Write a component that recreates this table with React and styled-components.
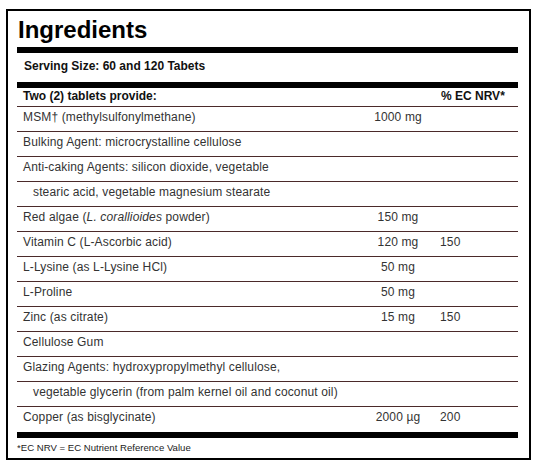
import React from 'react'
import styled, { createGlobalStyle } from 'styled-components'

const GlobalStyle = createGlobalStyle`
    body {
        margin: 0;
        background: #fff;
        font-family: "Liberation Sans", Arial, sans-serif;
    }
`

const Panel = styled.section`
    box-sizing: border-box;
    width: 525px;
    height: 451px;
    margin: 9px 0 0 6px;
    padding: 5px 11px 0 9px;
    border: 2px solid #000;
    background: #fff;
`

const Title = styled.h1`
    margin: 0 0 3px 1px;
    font-size: 24px;
    line-height: 28px;
    font-weight: 700;
    color: #000;
`

const Bar = styled.div`
    height: 6px;
    background: #000;
`

const Serving = styled.div`
    height: 29px;
    padding: 5px 0 0 7px;
    box-sizing: border-box;
    font-size: 12px;
    line-height: 16px;
    font-weight: 700;
    color: #111;
`

const Row = styled.div`
    display: grid;
    grid-template-columns: 1fr 80px 80px;
    box-sizing: border-box;
    height: ${(p) => (p.$head ? '19px' : '25px')};
    padding-bottom: ${(p) => (p.$head ? '1px' : '4px')};
    border-bottom: ${(p) => (p.$last ? 'none' : '1px solid #4b2a2a')};
    font-size: 12px;
    line-height: ${(p) => (p.$head ? '16px' : '20px')};
    font-weight: ${(p) => (p.$head ? 700 : 400)};
    letter-spacing: ${(p) => (p.$head ? '0' : '0.14px')};
    color: ${(p) => (p.$head ? '#111' : '#333')};
`

const Name = styled.span`
    padding-left: ${(p) => (p.$indent ? '16px' : '6px')};
    white-space: nowrap;
`

const Amount = styled.span`
    text-align: center;
    white-space: nowrap;
`

const Nrv = styled.span`
    padding-left: ${(p) => (p.$head ? '3px' : '2px')};
    white-space: nowrap;
`

const Footnote = styled.p`
    margin: 0;
    padding-top: 3px;
    font-size: 9.6px;
    line-height: 14px;
    color: #222;
`

const rows = [
    { name: 'MSM† (methylsulfonylmethane)', amount: '1000 mg' },
    { name: 'Bulking Agent: microcrystalline cellulose' },
    { name: 'Anti-caking Agents: silicon dioxide, vegetable' },
    { name: 'stearic acid, vegetable magnesium stearate', indent: true },
    {
        name: (
            <>
                Red algae (<i>L. corallioides</i> powder)
            </>
        ),
        amount: '150 mg',
    },
    { name: 'Vitamin C (L-Ascorbic acid)', amount: '120 mg', nrv: '150' },
    { name: 'L-Lysine (as L-Lysine HCl)', amount: '50 mg' },
    { name: 'L-Proline', amount: '50 mg' },
    { name: 'Zinc (as citrate)', amount: '15 mg', nrv: '150' },
    { name: 'Cellulose Gum' },
    { name: 'Glazing Agents: hydroxypropylmethyl cellulose,' },
    {
        name: 'vegetable glycerin (from palm kernel oil and coconut oil)',
        indent: true,
    },
    { name: 'Copper (as bisglycinate)', amount: '2000 µg', nrv: '200' },
]

const App = () => {
    return (
        <>
            <GlobalStyle />
            <Panel>
                <Title>Ingredients</Title>
                <Bar />
                <Serving>Serving Size: 60 and 120 Tabets</Serving>
                <Bar />
                <Row $head>
                    <Name>Two (2) tablets provide:</Name>
                    <Amount />
                    <Nrv $head>% EC NRV*</Nrv>
                </Row>
                {rows.map((r, i) => (
                    <Row key={i} $last={i === rows.length - 1}>
                        <Name $indent={r.indent}>{r.name}</Name>
                        <Amount>{r.amount}</Amount>
                        <Nrv>{r.nrv}</Nrv>
                    </Row>
                ))}
                <Bar />
                <Footnote>*EC NRV = EC Nutrient Reference Value</Footnote>
            </Panel>
        </>
    )
}

export default App
